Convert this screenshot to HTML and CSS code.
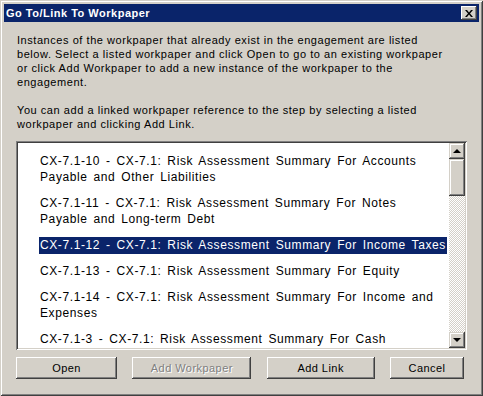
FILE: index.html
```html
<!DOCTYPE html>
<html lang="en">
<head>
    <meta charset="UTF-8">
    <title>Go To/Link To Workpaper</title>
    <link rel="stylesheet" href="styles.css">
</head>
<body>
    <div class="window">
        <div class="title-bar">
            <span class="title">Go To/Link To Workpaper</span>
            <button class="close-btn" title="Close">
                <svg width="8" height="7" viewBox="0 0 8 7">
                    <path d="M0 0h2l2 2.5L6 0h2L5 3.5 8 7H6L4 4.5 2 7H0l3-3.5z" fill="#000"/>
                </svg>
            </button>
        </div>
        <div class="content">
            <p class="info">Instances of the workpaper that already exist in the engagement are listed<br>below. Select a listed workpaper and click Open to go to an existing workpaper<br>or click Add Workpaper to add a new instance of the workpaper to the<br>engagement.</p>
            <p class="info">You can add a linked workpaper reference to the step by selecting a listed<br>workpaper and clicking Add Link.</p>

            <div class="list-box">
                <ul class="list">
                    <li><span>CX-7.1-10 - CX-7.1: Risk Assessment Summary For Accounts<br>Payable and Other Liabilities</span></li>
                    <li><span>CX-7.1-11 - CX-7.1: Risk Assessment Summary For Notes<br>Payable and Long-term Debt</span></li>
                    <li class="selected"><span>CX-7.1-12 - CX-7.1: Risk Assessment Summary For Income Taxes</span></li>
                    <li><span>CX-7.1-13 - CX-7.1: Risk Assessment Summary For Equity</span></li>
                    <li><span>CX-7.1-14 - CX-7.1: Risk Assessment Summary For Income and<br>Expenses</span></li>
                    <li><span>CX-7.1-3 - CX-7.1: Risk Assessment Summary For Cash</span></li>
                </ul>
                <div class="scrollbar">
                    <div class="sb-btn"><span class="arrow-up"></span></div>
                    <div class="sb-thumb"></div>
                    <div class="sb-track"></div>
                    <div class="sb-btn"><span class="arrow-down"></span></div>
                </div>
            </div>

            <div class="buttons">
                <button class="btn btn-open">Open</button>
                <button class="btn btn-add" disabled>Add Workpaper</button>
                <button class="btn btn-link">Add Link</button>
                <button class="btn btn-cancel">Cancel</button>
            </div>
        </div>
    </div>
</body>
</html>
```

FILE: styles.css
```css
body {
    margin: 0;
    font-family: "Liberation Sans", Arial, sans-serif;
    font-size: 11px;
    color: #000;
}
.window {
    width: 483px;
    height: 396px;
    box-sizing: border-box;
    background: #d4d0c8;
    padding: 4px;
    box-shadow: inset 1px 1px 0 #d4d0c8, inset -1px -1px 0 #404040,
                inset 2px 2px 0 #fff, inset -2px -2px 0 #808080;
    display: flex;
    flex-direction: column;
}
.title-bar {
    height: 18px;
    background: #0a246a;
    display: flex;
    align-items: center;
    justify-content: space-between;
    padding: 0 2px;
}
.title {
    color: #fff;
    font-weight: bold;
    font-size: 11px;
    letter-spacing: 0.5px;
}
.close-btn {
    width: 16px;
    height: 14px;
    padding: 0;
    border: none;
    background: #d4d0c8;
    box-shadow: inset -1px -1px 0 #404040, inset 1px 1px 0 #fff,
                inset -2px -2px 0 #808080;
    display: flex;
    align-items: center;
    justify-content: center;
}
.content {
    flex: 1;
    padding: 11px 12px 0 12px;
}
.info {
    margin: 0 0 14px 1px;
    line-height: 14px;
    letter-spacing: 0.55px;
    white-space: nowrap;
}
.info + .info {
    margin-bottom: 10px;
}
.list-box {
    height: 209px;
    box-sizing: border-box;
    background: #fff;
    display: flex;
    padding: 2px;
    box-shadow: inset 1px 1px 0 #808080, inset -1px -1px 0 #fff,
                inset 2px 2px 0 #404040, inset -2px -2px 0 #d4d0c8;
}
.list {
    flex: 1;
    list-style: none;
    margin: 0;
    padding: 5px 0 0 22px;
    overflow: hidden;
    font-size: 12px;
    letter-spacing: 0.6px;
    word-spacing: 2px;
    white-space: nowrap;
}
.list li {
    padding: 5px 0;
    line-height: 16px;
}
.list li.selected span {
    background: #0a246a;
    color: #fff;
    padding: 1px 1px 2px 1px;
    margin-left: -1px;
}
.scrollbar {
    width: 16px;
    display: flex;
    flex-direction: column;
}
.sb-btn,
.sb-thumb {
    background: #d4d0c8;
    box-shadow: inset -1px -1px 0 #404040, inset 1px 1px 0 #d4d0c8,
                inset -2px -2px 0 #808080, inset 2px 2px 0 #fff;
}
.sb-btn {
    height: 16px;
    display: flex;
    align-items: center;
    justify-content: center;
}
.sb-thumb {
    height: 37px;
}
.sb-track {
    flex: 1;
    background: repeating-conic-gradient(#fff 0 25%, #d4d0c8 0 50%) 0 0 / 2px 2px;
}
.arrow-up {
    width: 0;
    height: 0;
    border-left: 4px solid transparent;
    border-right: 4px solid transparent;
    border-bottom: 4px solid #000;
}
.arrow-down {
    width: 0;
    height: 0;
    border-left: 4px solid transparent;
    border-right: 4px solid transparent;
    border-top: 4px solid #000;
}
.buttons {
    display: flex;
    justify-content: space-between;
    margin-top: 7px;
    width: 448px;
}
.btn {
    height: 22px;
    padding: 0;
    border: none;
    background: #d4d0c8;
    font-family: "Liberation Sans", Arial, sans-serif;
    font-size: 11px;
    letter-spacing: 0.45px;
    color: #000;
    box-shadow: inset -1px -1px 0 #404040, inset 1px 1px 0 #fff,
                inset -2px -2px 0 #808080;
}
.btn:disabled {
    color: #808080;
    text-shadow: 1px 1px 0 #fff;
}
.btn-open { width: 101px; }
.btn-add { width: 119px; }
.btn-link { width: 108px; }
.btn-cancel { width: 74px; }
```
